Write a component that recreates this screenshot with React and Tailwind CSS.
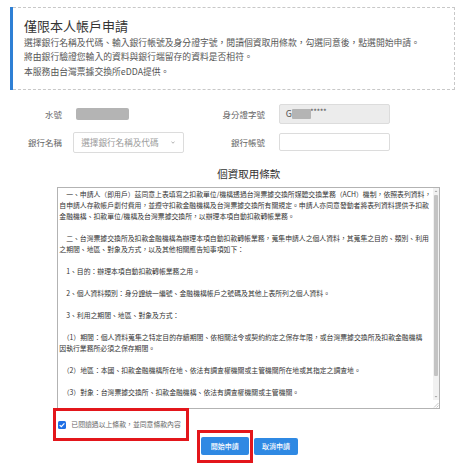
const LINES = [
  "　一、申請人（即用戶）茲同意上表填寫之扣款單位/機構透過台灣票據交換所媒體交換業務（ACH）機制，依照表列資料，",
  "自申請人存款帳戶劃付費用，並遵守扣款金融機構及台灣票據交換所有關規定。申請人亦同意發動者將表列資料提供予扣款",
  "金融機構、扣款單位/機構及台灣票據交換所，以辦理本項自動扣款轉帳業務。",
  "",
  "　二、台灣票據交換所及扣款金融機構為辦理本項自動扣款轉帳業務，蒐集申請人之個人資料，其蒐集之目的、類別、利用",
  "之期間、地區、對象及方式，以及其他相關應告知事項如下：",
  "",
  "　1、目的：辦理本項自動扣款轉帳業務之用。",
  "",
  "　2、個人資料類別：身分證統一編號、金融機構帳戶之號碼及其他上表所列之個人資料。",
  "",
  "　3、利用之期間、地區、對象及方式：",
  "",
  "　（1）期間：個人資料蒐集之特定目的存續期間、依相關法令或契約約定之保存年限，或台灣票據交換所及扣款金融機構",
  "因執行業務所必須之保存期間。",
  "",
  "　（2）地區：本國、扣款金融機構所在地、依法有調查權機關或主管機關所在地或其指定之調查地。",
  "",
  "　（3）對象：台灣票據交換所、扣款金融機構、依法有調查權機關或主管機關。",
  "",
  "",
];

export default function App() {
  return (
    <div className="relative h-[470px] w-[468px] overflow-hidden bg-white font-['Noto_Sans_CJK_TC','Noto_Sans',sans-serif]">
      {/* Header notice */}
      <div className="ml-[10px] mt-[7px] flex h-[83px] w-[445px]">
        <div className="w-[3px] bg-[#2f80d5]" />
        <div className="flex-1 border-y border-r border-dashed border-[#c8c8c8] pl-[11px] pt-[8.7px]">
          <div className="text-[13px] leading-[18px] text-[#333]">僅限本人帳戶申請</div>
          <div className="mt-[1.5px] text-[8.8px] leading-[14.3px] text-[#555]">
            <div className="whitespace-nowrap">選擇銀行名稱及代碼、輸入銀行帳號及身分證字號，閱讀個資取用條款，勾選同意後，點選開始申請。</div>
            <div className="whitespace-nowrap">將由銀行驗證您輸入的資料與銀行端留存的資料是否相符。</div>
            <div className="whitespace-nowrap">本服務由台灣票據交換所eDDA提供。</div>
          </div>
        </div>
      </div>

      {/* Form row 1 */}
      <div className="mt-[14px] flex h-[20px] items-center text-[8.5px] text-[#666]">
        <div className="w-[62px] text-right">水號</div>
        <div className="ml-[10.7px] w-[111.3px]">
          <div className="ml-[3.3px] h-[11.3px] w-[53.3px] rounded-[2px] bg-[#b4b4b4] blur-[0.5px]" />
        </div>
        <div className="w-[81px] text-right">身分證字號</div>
        <div className="ml-[14.3px] flex h-[19.3px] w-[110.7px] items-center rounded-[2px] border border-[#dcdcdc] bg-[#ececec] pl-[5.5px] text-[9px] text-[#555]">
          <span>G</span>
          <div className="h-[9.3px] w-[19px] rounded-[1px] bg-[#b4b4b4] blur-[0.5px]" />
          <span className="-ml-[1px] -mt-[3px] text-[8px] tracking-[-0.5px]">*****</span>
        </div>
      </div>

      {/* Form row 2 */}
      <div className="mt-[7.7px] flex h-[21px] items-center text-[8.5px] text-[#666]">
        <div className="w-[62px] text-right">銀行名稱</div>
        <div className="ml-[10.7px] flex h-[21px] w-[111.3px] items-center justify-between rounded-[2px] border border-[#dcdcdc] bg-white pl-[7.5px] pr-[8px]">
          <span className="text-[8.6px] text-[#9a9a9a]">選擇銀行名稱及代碼</span>
          <svg width="4" height="3" viewBox="0 0 4 3">
            <path d="M0.5 0.8 L2 2.2 L3.5 0.8" fill="none" stroke="#999" strokeWidth="0.8" />
          </svg>
        </div>
        <div className="w-[81px] text-right">銀行帳號</div>
        <div className="ml-[14.3px] h-[18.4px] w-[110.7px] rounded-[2px] border border-[#dcdcdc] bg-white" />
      </div>

      {/* Terms section */}
      <div className="ml-[57.3px] w-[382.7px]">
        <div className="mt-[14.3px] text-center text-[10.5px] leading-[14px] text-[#333]">個資取用條款</div>
        <div className="mt-[5.7px] flex h-[222.3px] border border-[#b3b3b3]">
          <div className="flex-1 overflow-hidden pl-[1px] pt-[1.3px] text-[6.85px] leading-[11px] text-[#333]">
            {LINES.map((l, i) => (
              <div key={i} className="h-[11px] whitespace-nowrap">
                {l}
              </div>
            ))}
          </div>
          <div className="flex w-[6px] flex-col bg-[#f1f1f1]">
            <div className="flex h-[6px] items-center justify-center">
              <svg width="6" height="6" viewBox="0 0 6 6">
                <polygon points="1.6,4 3,2.4 4.4,4" fill="#a3a3a3" />
              </svg>
            </div>
            <div className="mx-[0.6px] mt-[1px] h-[181px] rounded-[1px] bg-[#c3c3c3]" />
            <div className="flex-1" />
            <div className="flex h-[6px] items-center justify-center">
              <svg width="6" height="6" viewBox="0 0 6 6">
                <polygon points="1.6,2 3,3.6 4.4,2" fill="#a3a3a3" />
              </svg>
            </div>
            <div className="flex h-[8px] items-end justify-end bg-white">
              <svg width="6" height="6" viewBox="0 0 6 6">
                <path d="M5.5 1 L1 5.5 M5.5 3.5 L3.5 5.5" stroke="#b0b0b0" strokeWidth="0.7" />
              </svg>
            </div>
          </div>
        </div>

        {/* Agreement checkbox */}
        <div className="-ml-[4.6px] -mt-[0.7px] flex h-[32.7px] w-[136.6px] items-center border-[3px] border-[#e3161b] pl-[2.6px]">
          <div className="flex h-[8px] w-[8px] items-center justify-center rounded-[1.5px] bg-[#1f6fe5]">
            <svg width="8" height="8" viewBox="0 0 8 8">
              <path d="M1.7 4.1 L3.3 5.7 L6.4 2.4" fill="none" stroke="#fff" strokeWidth="1.2" />
            </svg>
          </div>
          <span className="ml-[5px] whitespace-nowrap text-[6.85px] text-[#666]">已閱讀過以上條款，並同意條款內容</span>
        </div>

        {/* Buttons */}
        <div className="-mt-[11px] flex items-center justify-center pr-[2.3px]">
          <div className="border-[3px] border-[#e3161b] pb-[5.3px] pl-[0.7px] pr-[1.6px] pt-[4.3px]">
            <button className="flex h-[17.7px] w-[47.7px] items-center justify-center rounded-[2px] bg-[#2f89e3] text-[7px] font-medium text-white">
              開始申請
            </button>
          </div>
          <button className="ml-[1px] flex h-[17.7px] w-[43.4px] items-center justify-center rounded-[2px] bg-[#2f89e3] text-[7px] font-medium text-white">
            取消申請
          </button>
        </div>
      </div>
    </div>
  );
}
